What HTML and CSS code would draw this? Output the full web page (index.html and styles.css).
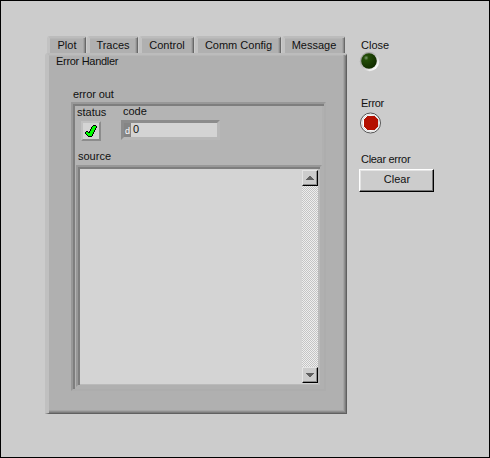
FILE: index.html
```
<!DOCTYPE html>
<html lang="en">
<head>
<meta charset="utf-8">
<title>Error Handler</title>
<link rel="stylesheet" href="styles.css">
</head>
<body>
<main class="window">
  <section class="tab-control">
    <nav class="tabs">
      <div class="tab plot">Plot</div>
      <div class="tab traces">Traces</div>
      <div class="tab control">Control</div>
      <div class="tab comm">Comm Config</div>
      <div class="tab message">Message</div>
    </nav>
    <div class="page">
      <div class="title tight">Error Handler</div>
      <div class="group-label">error out</div>
      <div class="cluster">
        <div class="fields">
          <div class="status-field">
            <div class="label">status</div>
            <div class="status">
              <svg width="12" height="12" viewBox="0 0 12 12" shape-rendering="crispEdges"><path d="M8 0h3v1h1v2h-1v2h-1v2H9v2H8v2H7v1H3v-1H2v-1H1V9H0V7h1V6h2v1h1V6h1V4h1V2h1V1h1z" fill="#000"/><path d="M8 1h3v2h-1v2H9v2H8v2H7v2H3v-1H2V9H1V7h2v1h2V6h1V4h1V2h1z" fill="#0f0"/></svg>
            </div>
          </div>
          <div class="code-field">
            <div class="label">code</div>
            <div class="numeric"><span class="radix">d</span><span class="value">0</span></div>
          </div>
        </div>
        <div class="label source-label">source</div>
        <div class="source">
          <div class="text-area"></div>
          <div class="scrollbar">
            <div class="arrow"><svg width="8" height="4" viewBox="0 0 8 4" shape-rendering="crispEdges"><path d="M3 0h2v1h1v1h1v1h1v1H0V3h1V2h1V1h1z" fill="#606060"/></svg></div>
            <div class="track"></div>
            <div class="arrow"><svg width="8" height="4" viewBox="0 0 8 4" shape-rendering="crispEdges"><path d="M0 0h8v1H7v1H6v1H5v1H3V3H2V2H1V1H0z" fill="#606060"/></svg></div>
          </div>
        </div>
      </div>
    </div>
  </section>
  <aside class="side">
    <div class="label close-label">Close</div>
    <svg class="led" width="22" height="22" viewBox="0 0 22 22">
      <defs>
        <linearGradient id="rim" x1="0" y1="0" x2="1" y2="1"><stop offset=".15" stop-color="#a0a0a0"/><stop offset=".5" stop-color="#c4c4c4"/><stop offset=".85" stop-color="#fff"/></linearGradient>
        <radialGradient id="green" cx=".32" cy=".3" r=".7"><stop offset="0" stop-color="#7d9a72"/><stop offset=".22" stop-color="#234d08"/><stop offset="1" stop-color="#122e00"/></radialGradient>
      </defs>
      <circle cx="10.5" cy="10.5" r="9.7" fill="url(#rim)"/>
      <circle cx="10" cy="10" r="7.8" fill="url(#green)"/>
    </svg>
    <div class="label tight error-label">Error</div>
    <svg class="led error-led" width="22" height="22" viewBox="0 0 22 22">
      <circle cx="10.5" cy="11" r="10" fill="#fff" stroke="#555"/>
      <circle cx="10.5" cy="11" r="8.4" fill="none" stroke="#c4c4c4" stroke-width=".7"/>
      <path d="M7 4h8v1h1v1h1v1h1v8h-1v1h-1v1h-1v1H7v-1H6v-1H5v-1H4V7h1V6h1V5h1z" fill="#b41000"/>
    </svg>
    <div class="label tight clear-label">Clear error</div>
    <div class="clear-button">Clear</div>
  </aside>
</main>
</body>
</html>
```
FILE: styles.css
```
* { box-sizing: border-box; }
body {
  margin: 0;
  font: 11px/13px "Liberation Sans", Arial, sans-serif;
  color: #111;
}
svg { display: block; }
.window {
  display: flex;
  width: 490px;
  height: 458px;
  padding: 35px 0 0 44px;
  border: 1px solid #000;
  background: #ccc;
  white-space: nowrap;
}
.tab-control { width: 302px; }
.tabs { display: flex; gap: 1px; height: 17px; padding-left: 2px; }
.tab {
  height: 17px;
  padding: 1px 1px 0 0;
  border: solid;
  border-width: 2px 1px 0 3px;
  border-color: #bcbcbc #686868 #b0b0b0 #c2c2c2;
  border-radius: 3px 2px 0 0;
  box-shadow: inset -1px 0 #8c8c8c, inset -2px 0 #a4a4a4, inset 0 1px #b6b6b6;
  background: #b0b0b0;
  text-align: center;
}
.plot { width: 39px; }
.traces { width: 51px; }
.control { width: 55px; }
.comm { width: 86px; }
.message { width: 63px; }
.page {
  height: 361px;
  padding: 0 0 0 22px;
  border: solid;
  border-width: 2px 1px 1px 4px;
  border-color: #bcbcbc #606060 #606060 #c0c0c0;
  border-radius: 3px 3px 0 0;
  box-shadow: inset -1px -1px #7c7c7c, inset -2px -2px #909090, inset -3px -3px #a4a4a4, inset 0 1px #b6b6b6;
  background: #b0b0b0;
}
.title { margin-left: -15px; }
.tight { letter-spacing: -0.3px; }
.group-label { margin: 20px 0 1px 2px; letter-spacing: -0.1px; }
.cluster {
  width: 255px;
  height: 289px;
  padding: 2px 2px 2px 4px;
  border: 2px solid;
  border-color: #989898 #adadad #adadad #989898;
  box-shadow: inset 2px 2px #7e7e7e, inset -2px -2px #b0b0b0;
  background: #b4b4b4;
}
.fields { display: flex; height: 44px; }
.status-field { width: 44px; }
.status {
  display: grid;
  place-items: center;
  width: 20px;
  height: 20px;
  margin: 2px 0 0 4px;
  border: 2px solid;
  border-color: #c0c0c0 #8c8c8c #8c8c8c #c0c0c0;
  background: #d4d4d4;
}
.code-field .label { margin: -1px 0 2px 2px; }
.numeric {
  display: flex;
  width: 99px;
  height: 20px;
  border: 3px solid;
  border-color: #8c8c8c #b8b8b8 #b8b8b8 #8c8c8c;
  background: #d4d4d4;
}
.radix {
  width: 7px;
  padding: 3px 0 0 1px;
  background: #858585;
  color: #fff;
  font-size: 9px;
  line-height: 10px;
}
.value { padding-left: 2px; }
.source-label { margin-left: 1px; }
.source {
  display: flex;
  width: 246px;
  height: 222px;
  margin: 2px 0 0 -1px;
  padding: 2px 2px 1px 2px;
  border: 2px solid;
  border-color: #989898 #b0b0b0 #b0b0b0 #989898;
  box-shadow: inset 2px 2px #7e7e7e, inset -2px -1px #bababa;
  background: #d4d4d4;
}
.text-area { flex: 1; }
.scrollbar { display: flex; flex-direction: column; width: 16px; padding: 1px 0; }
.arrow {
  display: grid;
  place-items: center;
  width: 16px;
  height: 16px;
  border: 1px solid;
  border-color: #e4e4e4 #000 #000 #e4e4e4;
  box-shadow: inset -1px -1px #8c8c8c;
  background: #ccc;
}
.track {
  flex: 1;
  background: repeating-conic-gradient(#eee 0 25%, #c4c4c4 0 50%) 0 0 / 2px 2px;
}
.side { width: 76px; margin-left: 12px; padding-top: 3px; }
.side .label { margin-left: 2px; }
.led { margin-top: -1px; }
.error-label { margin-top: 24px; }
.side .error-led { margin: 2px 0 0 1px; }
.clear-label { margin-top: 19px; }
.clear-button {
  width: 75px;
  height: 23px;
  margin-top: 3px;
  padding: 3px 0 0 1px;
  border: 1px solid;
  border-color: #fff #000 #000 #fff;
  box-shadow: inset -1px -1px #777, inset 1px 1px #e4e4e4;
  background: #ccc;
  text-align: center;
}
```
